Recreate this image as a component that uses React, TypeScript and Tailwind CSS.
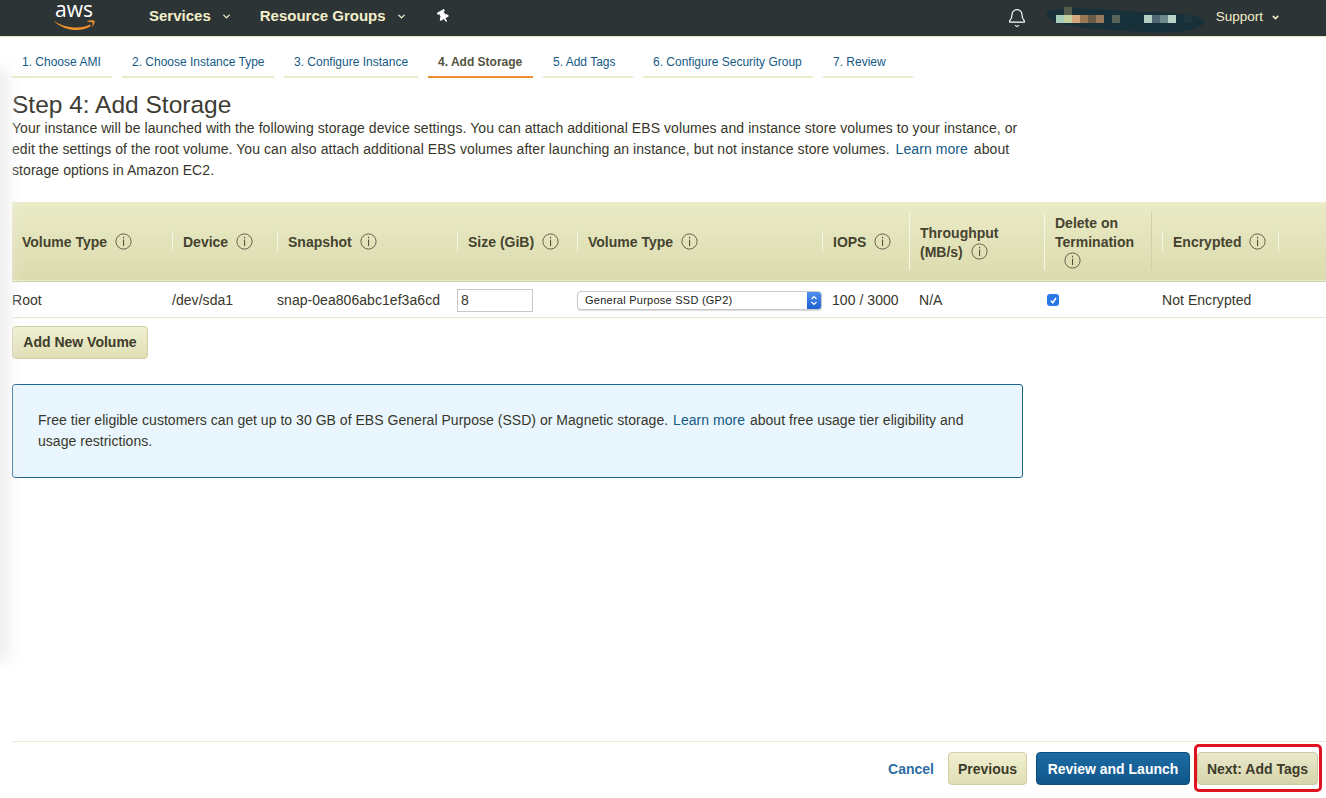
import React from 'react';
import { Bell, ChevronDown } from 'lucide-react';
import { FaThumbtack } from 'react-icons/fa';

const tabs = [
  { label: '1. Choose AMI', width: 'w-[100px]' },
  { label: '2. Choose Instance Type', width: 'w-[152px]' },
  { label: '3. Configure Instance', width: 'w-[134px]' },
  { label: '4. Add Storage', width: 'w-[105px]', active: true },
  { label: '5. Add Tags', width: 'w-[90px]' },
  { label: '6. Configure Security Group', width: 'w-[170px]' },
  { label: '7. Review', width: 'w-[90px]' }
];

const InfoIcon = () => (
  <svg width="17" height="17" viewBox="0 0 17 17" fill="none" className="inline-block shrink-0 ml-[4px] align-[-3px] text-[#55523c]">
    <circle cx="8.5" cy="8.5" r="7.6" stroke="currentColor" strokeWidth="0.9" />
    <rect x="8" y="3.8" width="1.1" height="1.5" fill="currentColor" />
    <rect x="8" y="6.6" width="1.1" height="6.4" fill="currentColor" />
  </svg>
);

const AwsLogo = () => (
  <div className="flex flex-col items-center w-[42px]">
    <span className="text-[21px] leading-[14px] text-white font-['Open_Sans',sans-serif]">aws</span>
    <svg width="42" height="12" viewBox="0 0 42 12" fill="#ec912d" className="mt-[3px]">
      <path d="M0.5 1.5C10 8.5 27 11 37 5.5L38 7C28 14 10 12 0.5 1.5Z" />
      <path d="M33.5 2.2C36 1.2 40 1 41.5 1.8C42 3.5 40.5 7 39 8.5C39.5 6.5 40 4.5 39.5 3.5C38.5 3 36 2.8 33.5 2.2Z" />
    </svg>
  </div>
);

const RedactedName = () => (
  <svg width="160" height="36" viewBox="0 0 160 36" className="shrink-0">
    <path d="M2 11C30 5 60 11 100 12C125 12 152 14 159 21C158 30 130 34 100 32C60 30 22 28 8 21C0 17 -1 13 2 11Z" fill="#17303a" />
    <rect x="18" y="7" width="8" height="8" fill="#555c4c" />
    <rect x="10" y="15" width="8" height="8" fill="#a5cdb8" />
    <rect x="18" y="15" width="8" height="8" fill="#c2cf9f" />
    <rect x="26" y="15" width="8" height="8" fill="#d4a67c" />
    <rect x="34" y="15" width="8" height="8" fill="#9a7754" />
    <rect x="42" y="15" width="8" height="8" fill="#6a5a48" />
    <rect x="50" y="15" width="8" height="8" fill="#987a5c" />
    <rect x="66" y="15" width="8" height="8" fill="#5a6358" />
    <rect x="98" y="15" width="8" height="8" fill="#b4cfc2" />
    <rect x="106" y="15" width="8" height="8" fill="#526772" />
    <rect x="114" y="15" width="8" height="8" fill="#6d8a8a" />
    <rect x="122" y="15" width="8" height="8" fill="#b9d4c7" />
    <rect x="138" y="15" width="8" height="8" fill="#20353c" />
  </svg>
);

const Header = () => (
  <header className="h-[37px] shrink-0 flex items-center bg-[#2d3436] border-b border-[#e6e2bd] text-[#f3efca]">
    <div className="ml-[53px] self-start mt-[2px]">
      <AwsLogo />
    </div>
    <nav className="ml-[54px] mt-[-3px] flex items-center text-[15px] font-bold">
      <span>Services</span>
      <ChevronDown size={11} strokeWidth={3} className="ml-[10px]" />
      <span className="ml-[28px]">Resource Groups</span>
      <ChevronDown size={11} strokeWidth={3} className="ml-[10px]" />
      <FaThumbtack size={13} className="ml-[30px] text-white -rotate-[30deg]" />
    </nav>
    <div className="ml-auto flex items-center">
      <Bell size={20} strokeWidth={1.4} className="text-white" />
      <div className="ml-[19px]">
        <RedactedName />
      </div>
      <span className="ml-[10px] mt-[-2px] text-[13.5px]">Support</span>
      <ChevronDown size={9} strokeWidth={4} className="ml-[8px] mr-[46px] mt-[-2px]" />
    </div>
  </header>
);

const Tabs = () => (
  <div className="flex gap-[10px] mt-[13px] h-[28px] ml-[12px]">
    {tabs.map(tab => (
      <div
        key={tab.label}
        className={`${tab.width} pl-[10px] pt-[3px] text-[12px] whitespace-nowrap border-b-2 ${
          tab.active ? 'border-[#ec912d] text-[#555340] font-bold' : 'border-[#eaebc8] text-[#145a86]'
        }`}
      >
        {tab.label}
      </div>
    ))}
  </div>
);

const HeadCell = ({ children, className = '' }: { children: React.ReactNode; className?: string }) => (
  <th className={`p-0 pt-[2px] font-bold text-left align-middle ${className}`}>{children}</th>
);

const Divider = ({ tall = false }: { tall?: boolean }) => (
  <span className={`absolute left-0 top-1/2 -translate-y-1/2 w-px bg-[#f7f6e6] ${tall ? 'h-[58px]' : 'h-[20px]'}`} />
);

const VolumeTable = () => (
  <table className="mt-[21px] ml-[12px] w-[1314px] table-fixed border-collapse text-[14px] text-[#38362a]">
    <colgroup>
      <col className="w-[160px]" />
      <col className="w-[105px]" />
      <col className="w-[180px]" />
      <col className="w-[120px]" />
      <col className="w-[245px]" />
      <col className="w-[87px]" />
      <col className="w-[135px]" />
      <col className="w-[107px]" />
      <col />
    </colgroup>
    <thead>
      <tr className="h-[79px] bg-gradient-to-b from-[#eaebc7] to-[#dcdbae] border-b border-[#cfcfa8] text-[#45432f] leading-[19px]">
        <HeadCell className="pl-[10px]">
          Volume Type <InfoIcon />
        </HeadCell>
        <HeadCell className="relative pl-[11px]">
          <Divider />
          Device <InfoIcon />
        </HeadCell>
        <HeadCell className="relative pl-[11px]">
          <Divider />
          Snapshot <InfoIcon />
        </HeadCell>
        <HeadCell className="relative pl-[11px]">
          <Divider />
          Size (GiB) <InfoIcon />
        </HeadCell>
        <HeadCell className="relative pl-[11px]">
          <Divider />
          Volume Type <InfoIcon />
        </HeadCell>
        <HeadCell className="relative pl-[11px]">
          <Divider />
          IOPS <InfoIcon />
        </HeadCell>
        <HeadCell className="relative pl-[11px]">
          <Divider tall />
          <div className="mt-[2px]">
            Throughput
            <br />
            (MB/s) <InfoIcon />
          </div>
        </HeadCell>
        <HeadCell className="relative pl-[11px]">
          <Divider tall />
          Delete on
          <br />
          Termination
          <div className="pl-[5px]">
            <InfoIcon />
          </div>
        </HeadCell>
        <HeadCell className="relative pl-[22px]">
          <span className="absolute left-0 top-1/2 -translate-y-1/2 h-[58px] w-px bg-[#cfcfa8]" />
          <span className="absolute left-[11px] top-1/2 -translate-y-1/2 h-[20px] w-px bg-[#f7f6e6]" />
          <span className="whitespace-nowrap">
            Encrypted <InfoIcon />
          </span>
          <span className="absolute left-[127px] top-1/2 -translate-y-1/2 h-[20px] w-px bg-[#f7f6e6]" />
        </HeadCell>
      </tr>
    </thead>
    <tbody className="tracking-[0.05px]">
      <tr className="h-[36px] border-b border-[#e6e6cc]">
        <td className="p-0 pt-[2px]">Root</td>
        <td className="p-0 pt-[2px]">/dev/sda1</td>
        <td className="p-0 pt-[2px] whitespace-nowrap">snap-0ea806abc1ef3a6cd</td>
        <td className="p-0 pt-[2px]">
          <div className="w-[76px] h-[23px] border border-[#c8c8c8] pl-[3px] text-[14px] leading-[21px] bg-white">8</div>
        </td>
        <td className="p-0 pt-[2px]">
          <div className="flex w-[245px] h-[19px] rounded-[4px] border border-[#c9c9c9] bg-white shadow-[0_1px_1px_rgba(0,0,0,0.15)] overflow-hidden">
            <span className="flex-1 pl-[7px] text-[11px] leading-[17px] tracking-[0.25px] text-[#222]">General Purpose SSD (GP2)</span>
            <span className="w-[14px] flex items-center justify-center bg-gradient-to-b from-[#4e90ee] to-[#1d5fd0]">
              <svg width="8" height="13" viewBox="0 0 8 13" fill="none" stroke="white" strokeWidth="1.2">
                <path d="M1.5 5L4 2.5L6.5 5" />
                <path d="M1.5 8L4 10.5L6.5 8" />
              </svg>
            </span>
          </div>
        </td>
        <td className="p-0 pt-[2px] pl-[10px] whitespace-nowrap">100 / 3000</td>
        <td className="p-0 pt-[2px] pl-[10px]">N/A</td>
        <td className="p-0 pt-[2px] pl-[3px]">
          <span className="flex w-[12px] h-[12px] items-center justify-center rounded-[3px] bg-[#2b78e4]">
            <svg width="9" height="9" viewBox="0 0 9 9" fill="none" stroke="white" strokeWidth="1.6">
              <path d="M2 4.8L3.8 6.8L7 2" />
            </svg>
          </span>
        </td>
        <td className="p-0 pt-[2px] pl-[11px] whitespace-nowrap">Not Encrypted</td>
      </tr>
    </tbody>
  </table>
);

const App: React.FC = () => {
  return (
    <div className="relative h-[798px] w-[1326px] overflow-hidden flex flex-col bg-white font-['Liberation_Sans',Arial,sans-serif]">
      <Header />
      <Tabs />
      <h1 className="ml-[12px] mt-[13px] text-[24.5px] leading-[28px] text-[#3d3c33]">Step 4: Add Storage</h1>
      <div className="ml-[12px] mt-[-1px] w-[1015px] text-[14px] tracking-[0.07px] leading-[21px] text-[#38362a] whitespace-nowrap">
        <p>Your instance will be launched with the following storage device settings. You can attach additional EBS volumes and instance store volumes to your instance, or</p>
        <p>
          edit the settings of the root volume. You can also attach additional EBS volumes after launching an instance, but not instance store volumes. <span className="mx-[2px] text-[#145a86]">Learn more</span> about
        </p>
        <p>storage options in Amazon EC2.</p>
      </div>
      <VolumeTable />
      <button className="ml-[12px] mt-[8px] w-[136px] h-[33px] rounded-[4px] border border-[#cfcea4] bg-gradient-to-b from-[#f0f0d2] to-[#dfdeb4] text-[14px] font-bold text-[#3d3b2a]">
        Add New Volume
      </button>
      <div className="ml-[12px] mt-[25px] w-[1011px] h-[94px] rounded-[3px] border border-[#1b6490] bg-[#e9f6fe] pl-[25px] pt-[25px] text-[14px] tracking-[0.03px] leading-[21px] text-[#38362a] whitespace-nowrap">
        <p>
          Free tier eligible customers can get up to 30 GB of EBS General Purpose (SSD) or Magnetic storage. <span className="mx-[1px] text-[#145a86]">Learn more</span> about free usage tier eligibility and
        </p>
        <p>usage restrictions.</p>
      </div>
      <footer className="mt-auto ml-[12px] h-[57px] border-t border-[#ecebd2] flex items-start justify-end pt-[10px] text-[14px] font-bold">
        <span className="mt-[7px] text-[#2e6da4]">Cancel</span>
        <button className="ml-[14px] w-[79px] h-[33px] pt-[1px] rounded-[4px] border border-[#cfcea4] bg-gradient-to-b from-[#f0f0d2] to-[#dfdeb4] text-[#3d3b2a]">Previous</button>
        <button className="ml-[9px] w-[154px] h-[33px] pt-[1px] rounded-[4px] border border-[#0d4f7c] bg-gradient-to-b from-[#1d6ca5] to-[#0e5689] text-white">Review and Launch</button>
        <div className="relative ml-[7px] mr-[8px] w-[121px]">
          <button className="w-full h-[33px] pt-[1px] rounded-[4px] border border-[#c9c8a0] bg-gradient-to-b from-[#e9e8cb] to-[#d6d5aa] text-[#3d3b2a]">Next: Add Tags</button>
          <span className="absolute left-[-3px] top-[-8px] w-[128px] h-[48px] rounded-[5px] border-[3px] border-[#e0121f]" />
        </div>
      </footer>
      <div className="absolute left-[-12px] top-[70px] w-[20px] h-[590px] bg-[#ececec] blur-[8px]" />
    </div>
  );
};

export default App;
